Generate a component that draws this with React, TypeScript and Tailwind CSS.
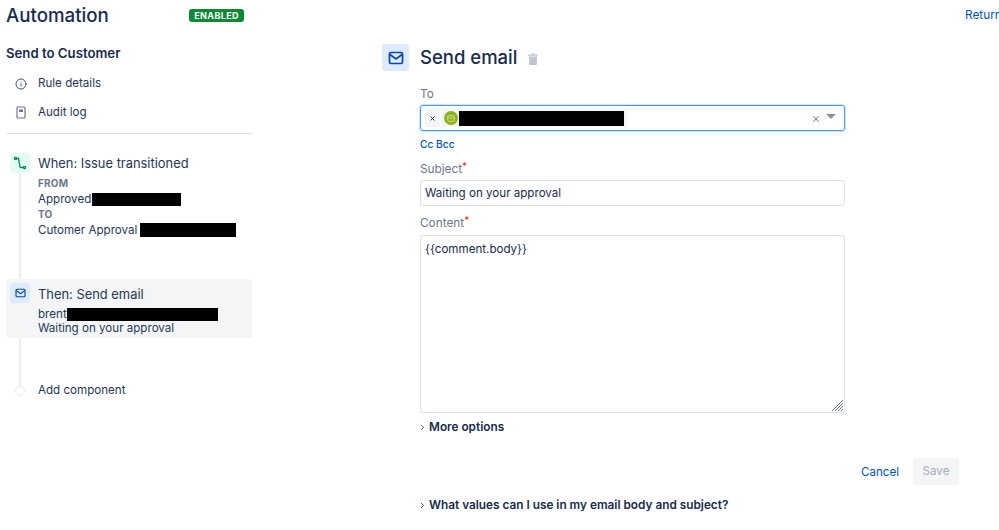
import React from 'react';
import { ChevronRight, Info, X } from 'lucide-react';

const MailIcon = ({ className }: { className: string }) => (
  <svg className={className} viewBox="0 0 16 14" fill="none" stroke="currentColor" strokeWidth="1.7">
    <rect x="1.5" y="1.5" width="13" height="11" rx="1.5" />
    <path d="M2 3.5l6 4.5 6-4.5" />
  </svg>
);

const Redacted = ({ className }: { className: string }) => <span className={`inline-block bg-black ${className}`} />;

const Required = () => <span className="text-[#de350b] relative top-[-3px] text-[10px] leading-none">*</span>;

const Sidebar = () => (
  <aside className="w-[246px] ml-[6px] shrink-0">
    <div className="mt-[1px] flex items-center justify-between h-[30px] w-[238px]">
      <h1 className="text-[18.7px] leading-[30px] text-[#172b4d] font-medium">Automation</h1>
      <span className="bg-[#0b8a33] text-white rounded-[3px] text-[9px] font-bold leading-[13px] px-[5px] tracking-[0.4px] mb-[2px]">ENABLED</span>
    </div>
    <h2 className="mt-[12px] text-[13.2px] leading-[20px] font-semibold text-[#172b4d]">Send to Customer</h2>
    <div className="mt-[6px] flex items-center h-[29px] pl-[9px] text-[#253858]">
      <Info size={12} className="text-[#42526e]" />
      <span className="ml-[11px] text-[11.6px]">Rule details</span>
    </div>
    <div className="flex items-center h-[29px] pl-[10px] text-[#253858]">
      <svg className="w-[10px] h-[13px] text-[#6b778c]" viewBox="0 0 10 13" fill="none" stroke="currentColor" strokeWidth="1.2">
        <rect x="1" y="1" width="8" height="11" rx="1" />
        <path d="M3 3.5h4v2.5h-4z" fill="currentColor" stroke="none" />
      </svg>
      <span className="ml-[12px] text-[11.6px]">Audit log</span>
    </div>
    <div className="mt-[6px] border-t border-[#dfe1e6]" />

    <div className="relative mt-[19px]">
      <div className="absolute left-[13px] top-[16px] h-[220px] w-[2px] bg-[#ebecf0]" />

      <div className="relative flex pl-[4px]">
        <div className="w-[20px] h-[20px] rounded-[3px] bg-[#e3fcef] flex items-center justify-center shrink-0">
          <svg className="w-[14px] h-[14px] text-[#00875a]" viewBox="0 0 14 14" fill="none" stroke="currentColor" strokeWidth="1.3">
            <circle cx="2.5" cy="2.5" r="1.1" />
            <circle cx="11.5" cy="11.5" r="1.1" />
            <path d="M3.6 2.5h1.9l1.5 8.5a.6.6 0 00.6.5h2.8" />
          </svg>
        </div>
        <div className="ml-[8px] text-[#253858]">
          <div className="text-[12.9px] leading-[22px] h-[22px]">When: Issue transitioned</div>
          <div className="text-[10px] leading-[16px] font-bold text-[#6b778c] tracking-[0.2px]">FROM</div>
          <div className="flex items-center text-[11.6px] leading-[16px] h-[16px]">
            Approved
            <Redacted className="w-[89px] h-[13px] ml-[1px]" />
          </div>
          <div className="text-[10px] leading-[15px] font-bold text-[#6b778c] tracking-[0.2px]">TO</div>
          <div className="flex items-center text-[11.6px] leading-[16px] h-[16px]">
            Cutomer Approval
            <Redacted className="w-[96px] h-[14px] ml-[3px]" />
          </div>
        </div>
      </div>

      <div className="relative mt-[41px] flex bg-[#f4f5f7] rounded-[3px] h-[59px] pl-[4px] pt-[4px]">
        <div className="w-[20px] h-[20px] rounded-[3px] bg-[#deebff] flex items-center justify-center shrink-0">
          <MailIcon className="w-[11px] h-[10px] text-[#0747a6]" />
        </div>
        <div className="ml-[8px] mt-[1px] text-[#253858]">
          <div className="text-[12.9px] leading-[22px] h-[22px]">Then: Send email</div>
          <div className="flex items-center text-[11.6px] leading-[14px] h-[14px] mt-[1px]">
            brent
            <Redacted className="w-[151px] h-[13px]" />
          </div>
          <div className="text-[11.6px] leading-[14px]">Waiting on your approval</div>
        </div>
      </div>

      <div className="relative mt-[43px] flex items-center h-[20px] pl-[9px]">
        <div className="w-[10px] h-[10px] rounded-full bg-white border border-[#ebecf0]" />
        <span className="ml-[13px] text-[11.6px] text-[#253858]">Add component</span>
      </div>
    </div>
  </aside>
);

const Field = ({ label, required, children }: { label: string; required?: boolean; children: React.ReactNode }) => (
  <div>
    <div className="text-[11.8px] leading-[16px] pt-[1px] h-[16px] text-[#6b778c]">
      {label}
      {required && <Required />}
    </div>
    {children}
  </div>
);

const EmailForm = () => (
  <main className="ml-[130px] w-[577px] shrink-0">
    <div className="mt-[44px] flex items-center h-[27px]">
      <div className="w-[27px] h-[27px] rounded-[3px] bg-[#deebff] flex items-center justify-center">
        <MailIcon className="w-[16px] h-[14px] text-[#0747a6]" />
      </div>
      <h2 className="ml-[11px] text-[18.5px] font-medium text-[#172b4d] leading-[27px]">Send email</h2>
      <svg className="ml-[11px] mt-[3px] w-[10px] h-[12px] text-[#c1c7d0]" viewBox="0 0 10 12" fill="currentColor">
        <path d="M0 1.5h3.2L3.8.5h2.4l.6 1H10v1.2H0zM1 3.5h8v7.2c0 .7-.6 1.3-1.3 1.3H2.3C1.6 12 1 11.4 1 10.7z" />
      </svg>
    </div>

    <div className="w-[425px] ml-[38px]">
      <div className="mt-[14px]">
        <Field label="To">
          <div className="mt-[4px] h-[26px] rounded-[3px] border border-[#4c9aff] shadow-[0_0_0_1px_#cfe3ff] flex items-center pl-[4px] pr-[8px]">
            <div className="w-[15px] h-[17px] bg-[#f4f5f7] flex items-center justify-center rounded-l-[2px]">
              <X size={7} strokeWidth={3} className="text-[#172b4d]" />
            </div>
            <div className="h-[17px] bg-[#f4f5f7] flex items-center pl-[3px] pr-[3px] ml-[1px]">
              <div className="w-[14px] h-[14px] rounded-full bg-[#8fb31c] flex items-center justify-center">
                <MailIcon className="w-[8px] h-[7px] text-[#d9e8a8]" />
              </div>
              <Redacted className="w-[165px] h-[15px] ml-[1px]" />
            </div>
            <X size={10} strokeWidth={2.5} className="ml-auto mt-[2px] text-[#7a869a]" />
            <div className="ml-[5px] mb-[3px] w-0 h-0 border-l-[5px] border-r-[5px] border-t-[5px] border-l-transparent border-r-transparent border-t-[#8993a4]" />
          </div>
        </Field>
        <div className="mt-[6px] text-[10.2px] leading-[14px] font-medium text-[#0052cc]">Cc Bcc</div>
      </div>

      <div className="mt-[9px]">
        <Field label="Subject" required>
          <div className="mt-[4px] h-[26px] rounded-[3px] border border-[#dfe1e6] flex items-center pl-[4px] pt-[2px] text-[11.6px] text-[#172b4d]">
            Waiting on your approval
          </div>
        </Field>
      </div>

      <div className="mt-[8px]">
        <Field label="Content" required>
          <div className="relative mt-[5px] h-[178px] rounded-[3px] border border-[#dfe1e6] pl-[4px] pt-[5px] text-[11.6px] leading-[17px] text-[#172b4d]">
            {'{{comment.body}}'}
            <svg className="absolute right-[1px] bottom-[1px] w-[12px] h-[12px] text-[#6b778c]" viewBox="0 0 12 12" stroke="currentColor" strokeWidth="1">
              <path d="M1 12L12 1M4 12l8-8M7 12l5-5M10 12l2-2" />
            </svg>
          </div>
        </Field>
      </div>

      <div className="mt-[7px] flex items-center h-[16px] text-[11.8px] font-semibold text-[#172b4d]">
        <ChevronRight size={9} strokeWidth={2.2} className="-ml-[2px] mr-[2px] mb-[2px] shrink-0" />
        <span>More options</span>
      </div>
    </div>

    <div className="mt-[22px] flex items-center justify-end w-[577px] h-[27px]">
      <span className="mt-[2px] text-[11.6px] text-[#0052cc]">Cancel</span>
      <div className="ml-[14px] w-[46px] h-[27px] rounded-[3px] bg-[#f4f5f7] flex items-center justify-center pt-[1px] text-[11.6px] text-[#a5adba]">Save</div>
    </div>

    <div className="ml-[38px] mt-[13px] flex items-center h-[16px] text-[11.8px] font-semibold text-[#172b4d]">
      <ChevronRight size={9} strokeWidth={2.2} className="-ml-[2px] mr-[2px] mb-[2px] shrink-0" />
      <span>What values can I use in my email body and subject?</span>
    </div>
  </main>
);

export default function App() {
  return (
    <div className="relative w-[999px] h-[530px] overflow-hidden bg-white flex font-['Inter','Liberation_Sans',sans-serif]">
      <Sidebar />
      <EmailForm />
      <span className="absolute left-[965px] top-[7px] text-[11.8px] text-[#0052cc] whitespace-nowrap">Return to list</span>
    </div>
  );
}
